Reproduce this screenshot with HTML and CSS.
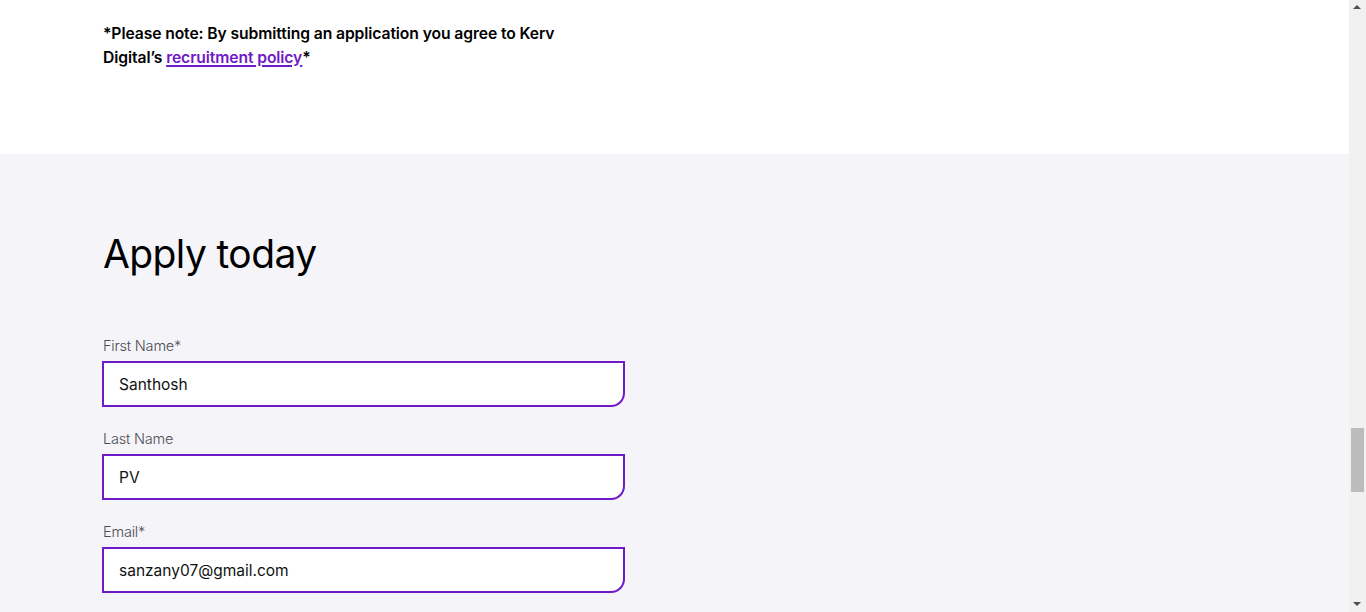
FILE: index.html
```html
<!DOCTYPE html>
<html lang="en">
<head>
<meta charset="utf-8">
<title>Apply today</title>
<link rel="stylesheet" href="styles.css">
</head>
<body>
<div class="window">
  <main class="page">
    <section class="note-section">
      <p class="note">*Please note: By submitting an application you agree to Kerv Digital’s <a href="#" class="link">recruitment policy</a>*</p>
    </section>
    <section class="apply-section">
      <h2 class="title">Apply today</h2>
      <form class="form">
        <div class="field">
          <label class="label" for="fn">First Name*</label>
          <input class="input" id="fn" type="text" value="Santhosh">
        </div>
        <div class="field">
          <label class="label" for="ln">Last Name</label>
          <input class="input" id="ln" type="text" value="PV">
        </div>
        <div class="field">
          <label class="label" for="em">Email*</label>
          <input class="input" id="em" type="text" value="sanzany07@gmail.com">
        </div>
      </form>
    </section>
  </main>
  <div class="scrollbar">
    <div class="arrow up"></div>
    <div class="track"><div class="thumb"></div></div>
    <div class="arrow down"></div>
  </div>
</div>
</body>
</html>
```
FILE: styles.css
```css
* { box-sizing: border-box; }
html, body { margin: 0; padding: 0; height: 100%; overflow: hidden; }
body { font-family: "Inter", "Liberation Sans", sans-serif; color: #000; }
.window { display: flex; height: 612px; }
.page { flex: 1; display: flex; flex-direction: column; background: #f5f4f9; }
.note-section { background: #fff; height: 154px; padding: 22px 0 0 103px; }
.note { margin: 0; width: 475px; font-size: 15.7px; font-weight: 600; line-height: 24px; letter-spacing: -0.1px; }
.link { color: #7019c8; text-decoration: underline; text-underline-offset: 2px; text-decoration-thickness: 2px; }
.apply-section { padding: 76px 0 0 102px; }
.title { margin: 0 0 0 1px; font-size: 39px; font-weight: 400; line-height: 48px; letter-spacing: -0.6px; }
.form { margin-top: 57px; display: flex; flex-direction: column; gap: 21px; width: 523px; }
.field { display: flex; flex-direction: column; gap: 5px; }
.label { padding: 1px 0 0 1px; font-size: 14.5px; font-weight: 300; color: #4c4c54; line-height: 20px; letter-spacing: -0.2px; }
.input { height: 46px; width: 523px; border: 2px solid #7019c8; border-radius: 0 0 14px 0; background: #fff; padding: 0 15px; font-family: inherit; font-size: 15.5px; color: #111; outline: none; }
.scrollbar { width: 17px; background: #f1f1f1; display: flex; flex-direction: column; }
.arrow { height: 17px; position: relative; }
.arrow.up::after, .arrow.down::after { content: ""; position: absolute; left: 4px; border-left: 4px solid transparent; border-right: 4px solid transparent; }
.arrow.up::after { top: 5px; border-bottom: 4px solid #505050; }
.arrow.down::after { top: 7px; border-top: 4px solid #505050; }
.track { flex: 1; padding: 411px 2px 0 2px; }
.thumb { height: 64px; background: #bcbcbc; }
```
